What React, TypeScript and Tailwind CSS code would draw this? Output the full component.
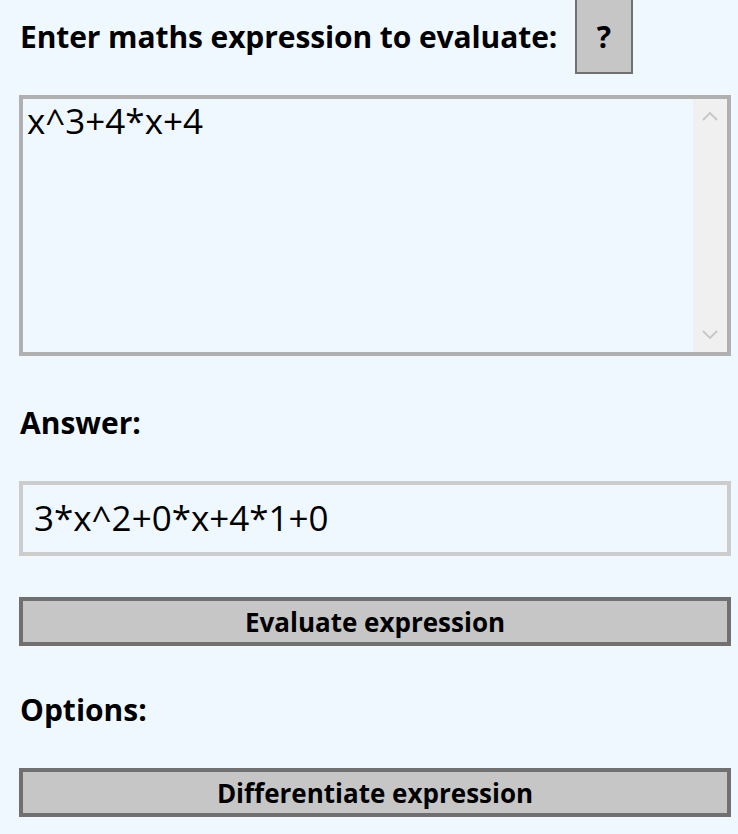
import React, { useState } from 'react';

const font = { fontFamily: '"Open Sans", "Noto Sans", sans-serif' };

export default function App() {
  const [expr, setExpr] = useState('x^3+4*x+4');
  const [answer] = useState('3*x^2+0*x+4*1+0');

  return (
    <div className="min-h-[834px] w-full bg-[#f0f8ff] text-black" style={font}>
      <div className="w-[712px] ml-[19px] flex flex-col">
        {/* Heading row */}
        <div className="flex items-center h-[74px]">
          <h1 className="text-[30px] font-bold leading-none ml-[1px] tracking-[-0.1px]">
            Enter maths expression to evaluate:
          </h1>
          <button className="ml-auto mr-[98px] w-[58px] h-[74px] bg-[#c6c6c6] border-x-2 border-b-2 border-[#707070] text-[30px] font-bold">
            ?
          </button>
        </div>

        {/* Expression box */}
        <div className="mt-[21px] h-[261px] border-4 border-[#b0b0b0] flex">
          <textarea
            value={expr}
            onChange={(e) => setExpr(e.target.value)}
            className="flex-1 resize-none bg-transparent outline-none px-[4px] pt-[2px] text-[35px] leading-[40px] overflow-hidden"
            style={font}
          />
          <div className="w-[34px] bg-[#f0f0f0] flex flex-col items-center justify-between py-[11px]">
            <svg width="18" height="12" viewBox="0 0 18 12" fill="none">
              <path d="M2 10 L9 3 L16 10" stroke="#c6c6c6" strokeWidth="1.8" />
            </svg>
            <svg width="18" height="12" viewBox="0 0 18 12" fill="none">
              <path d="M2 2 L9 9 L16 2" stroke="#c6c6c6" strokeWidth="1.8" />
            </svg>
          </div>
        </div>

        <h2 className="mt-[46px] h-[40px] flex items-center text-[30px] font-bold ml-[1px]">Answer:</h2>

        {/* Answer box */}
        <div className="mt-[39px] h-[75px] border-4 border-[#cccccc] flex items-center px-[11px] text-[35px]">
          {answer}
        </div>

        <button className="mt-[41px] h-[49px] border-4 border-[#707070] bg-[#c6c6c6] text-[26px] font-bold leading-none">
          Evaluate expression
        </button>

        <h2 className="mt-[43px] h-[40px] flex items-center text-[30px] font-bold ml-[1px]">Options:</h2>

        <button className="mt-[39px] h-[49px] border-4 border-[#707070] bg-[#c6c6c6] text-[26px] font-bold leading-none">
          Differentiate expression
        </button>
      </div>
    </div>
  );
}
